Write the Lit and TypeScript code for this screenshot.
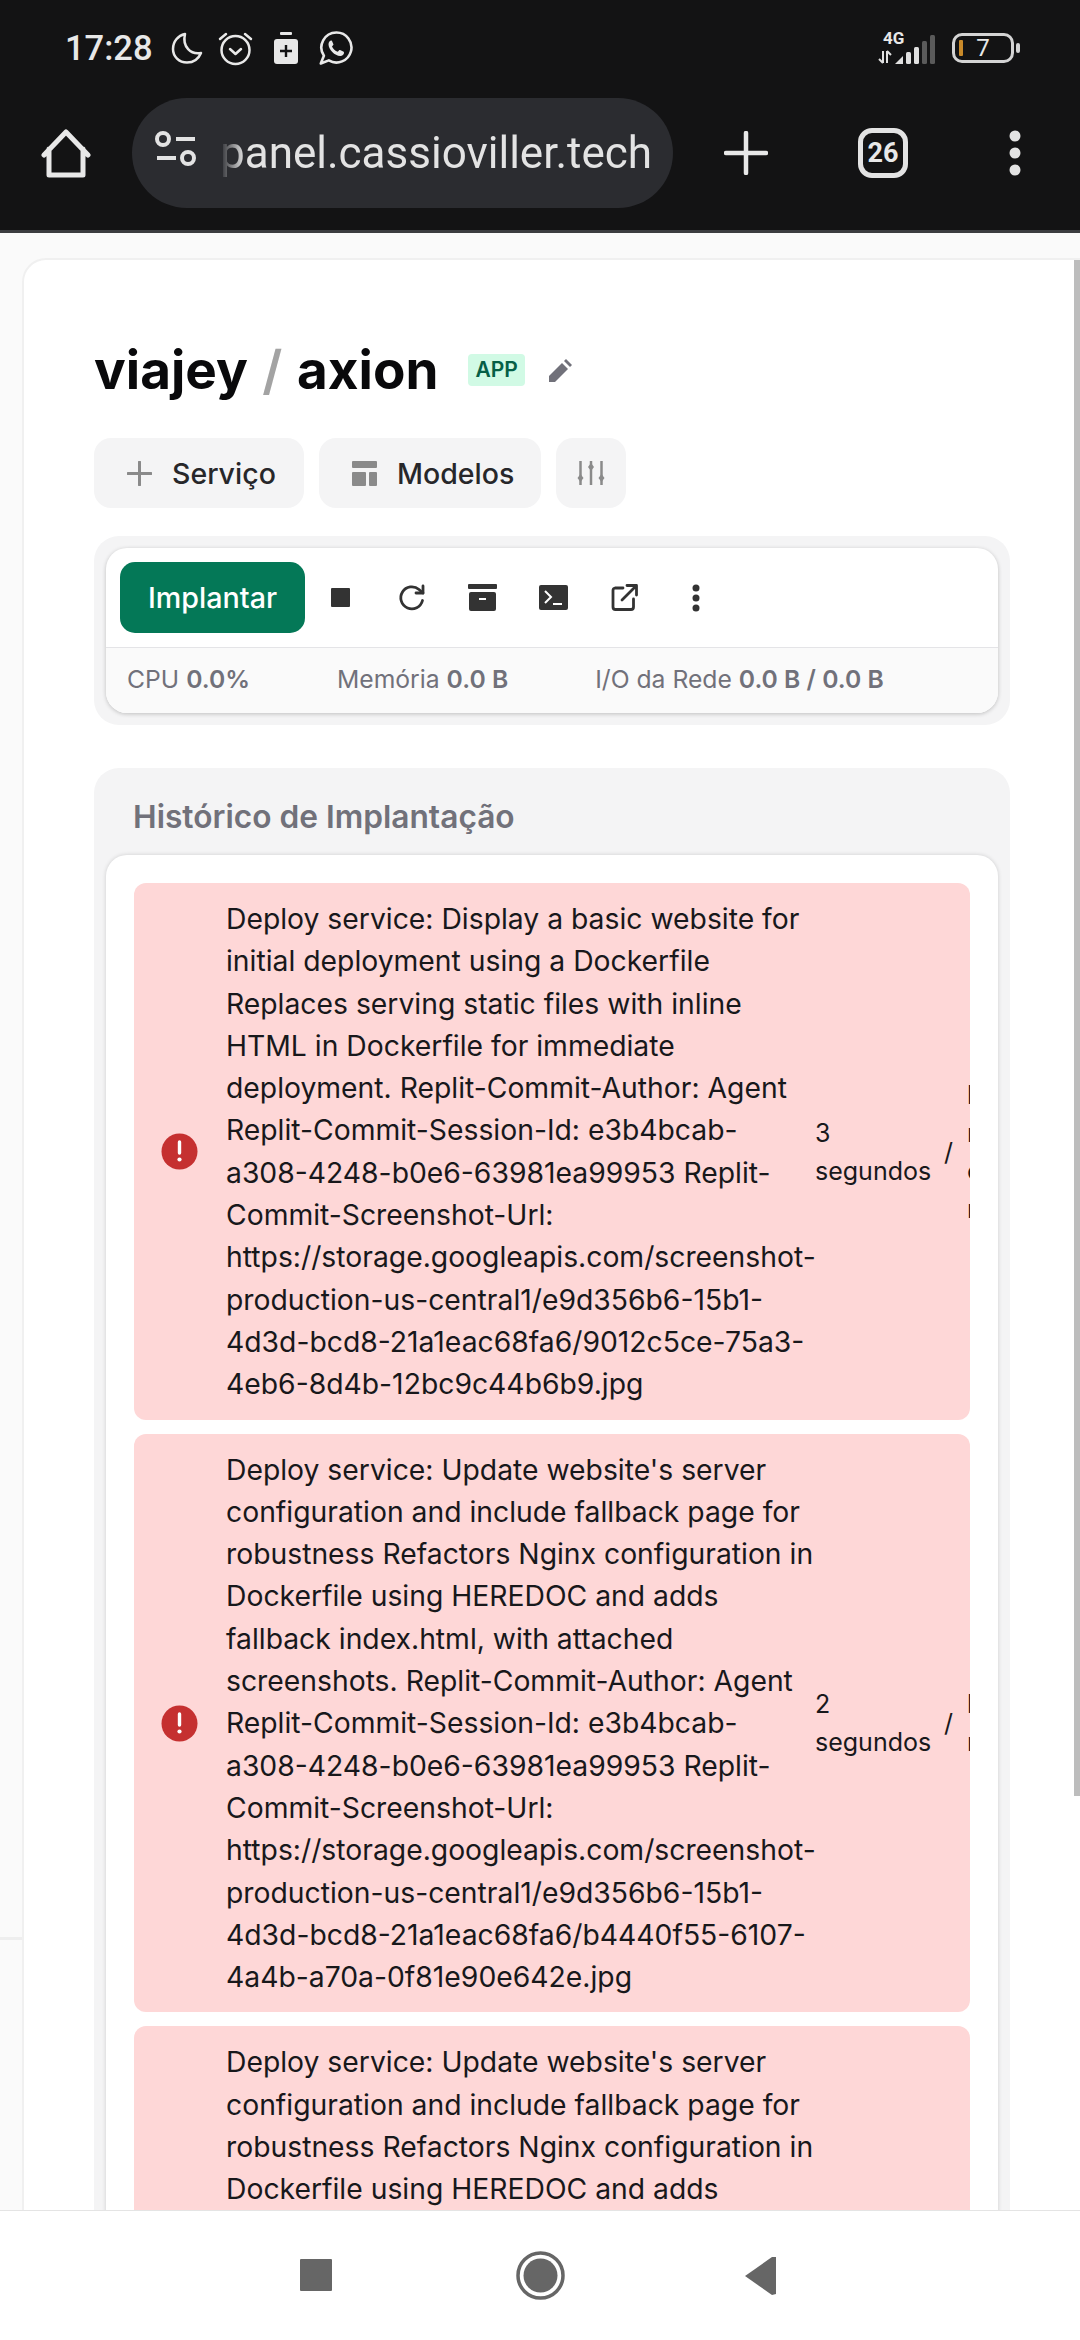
import { LitElement, html, css, svg } from 'lit';
import { customElement } from 'lit/decorators.js';

// deploy rows as shown in the history list
const deployments = [
  {
    text: "Deploy service: Display a basic website for initial deployment using a Dockerfile Replaces serving static files with inline HTML in Dockerfile for immediate deployment. Replit-Commit-Author: Agent Replit-Commit-Session-Id: e3b4bcab-a308-4248-b0e6-63981ea99953 Replit-Commit-Screenshot-Url: https://storage.googleapis.com/screenshot-production-us-central1/e9d356b6-15b1-4d3d-bcd8-21a1eac68fa6/9012c5ce-75a3-4eb6-8d4b-12bc9c44b6b9.jpg",
    time: '3 segundos',
    cut: ['b', 'n', 'c', 'n'],
  },
  {
    text: "Deploy service: Update website's server configuration and include fallback page for robustness Refactors Nginx configuration in Dockerfile using HEREDOC and adds fallback index.html, with attached screenshots. Replit-Commit-Author: Agent Replit-Commit-Session-Id: e3b4bcab-a308-4248-b0e6-63981ea99953 Replit-Commit-Screenshot-Url: https://storage.googleapis.com/screenshot-production-us-central1/e9d356b6-15b1-4d3d-bcd8-21a1eac68fa6/b4440f55-6107-4a4b-a70a-0f81e90e642e.jpg",
    time: '2 segundos',
    cut: ['b', 'n'],
  },
  {
    text: "Deploy service: Update website's server configuration and include fallback page for robustness Refactors Nginx configuration in Dockerfile using HEREDOC and adds fallback index.html, with attached screenshots. Replit-Commit-Author: Agent Replit-Commit-Session-Id: e3b4bcab-a308-4248-b0e6-63981ea99953 Replit-Commit-Screenshot-Url: https://storage.googleapis.com/screenshot-production-us-central1/e9d356b6-15b1-4d3d-bcd8-21a1eac68fa6/b4440f55-6107-4a4b-a70a-0f81e90e642e.jpg",
    time: '2 segundos',
    cut: ['b', 'n'],
  },
];

const errorIcon = svg`<circle cx="18.5" cy="18.5" r="18" fill="#c53030"/><path d="M18.5 9v11" stroke="#fff" stroke-width="3.4" stroke-linecap="round"/><circle cx="18.5" cy="26.5" r="2.1" fill="#fff"/>`;

@customElement('app-root')
export class AppRoot extends LitElement {
  static override styles = css`
    :host {
      display: flex;
      flex-direction: column;
      width: 1080px;
      height: 2340px;
      overflow: hidden;
      background: #fafafa;
      font-family: Inter, 'Liberation Sans', sans-serif;
    }
    svg { display: block; flex: none; }

    /* phone + browser chrome */
    .chrome {
      flex: none;
      height: 230px;
      background: #131314;
      border-bottom: 3px solid #3c3d40;
      font-family: Roboto, 'Liberation Sans', sans-serif;
      color: #e8e8e8;
    }
    .status {
      height: 96px;
      display: flex;
      align-items: center;
      padding: 0 66px 0 65px;
      box-sizing: border-box;
    }
    .clock { font-size: 34.5px; font-weight: 500; width: 106px; }
    .status .moon { margin-right: 15px; }
    .status .alarm { margin-right: 21px; }
    .status .med { margin-right: 21px; }
    .status .right { margin-left: auto; display: flex; align-items: center; }
    .net { position: relative; width: 58px; height: 34px; margin-right: 16px; }
    .net b {
      position: absolute;
      left: 5px;
      top: -1px;
      font-size: 17px;
      line-height: 17px;
      font-weight: 700;
    }
    .battery {
      position: relative;
      width: 62px;
      height: 30px;
      box-sizing: border-box;
      border: 3px solid #d4d4d4;
      border-radius: 10px;
      font-size: 24px;
      line-height: 24px;
      text-align: center;
    }
    .battery i {
      position: absolute;
      left: 4px;
      top: 4px;
      width: 4px;
      height: 16px;
      border-radius: 1px;
      background: #c98a2a;
    }
    .battery::after {
      content: '';
      position: absolute;
      right: -9px;
      top: 7px;
      width: 4px;
      height: 10px;
      border-radius: 2px;
      background: #d4d4d4;
    }
    .toolbar {
      height: 110px;
      margin-top: 2px;
      display: flex;
      align-items: center;
      padding-left: 41px;
    }
    .pill {
      margin-left: 41px;
      width: 541px;
      height: 110px;
      border-radius: 55px;
      background: #2b2c30;
      display: flex;
      align-items: center;
      padding-left: 23px;
      box-sizing: border-box;
    }
    .url {
      margin-left: 23px;
      font-size: 44px;
      color: #e3e3e3;
      white-space: nowrap;
      -webkit-mask-image: linear-gradient(90deg, transparent, #000 24px);
      mask-image: linear-gradient(90deg, transparent, #000 24px);
    }
    .newtab { margin-left: 51px; }
    .tabs {
      margin-left: 90px;
      width: 50px;
      height: 50px;
      box-sizing: border-box;
      border: 5px solid #e3e3e3;
      border-radius: 14px;
      font-size: 27px;
      font-weight: 700;
      line-height: 40px;
      text-align: center;
    }
    .more { margin-left: 101px; }

    /* page */
    .page {
      flex: 1;
      min-height: 0;
      display: flex;
      padding-top: 25px;
      overflow: hidden;
    }
    .gutter { flex: none; width: 22px; }
    .gutter div { height: 1679px; border-bottom: 3px solid #eeeeee; }
    .card {
      position: relative;
      flex: 1;
      min-width: 0;
      background: #fff;
      border: 2px solid #f0f0f0;
      border-right: 0;
      border-bottom: 0;
      border-top-left-radius: 24px;
      padding: 76px 70px 0 70px;
    }
    .scrollbar {
      position: absolute;
      right: 0;
      top: 0;
      width: 6px;
      height: 1536px;
      background: #bdbdbd;
    }
    .title { display: flex; align-items: center; height: 68px; }
    h1 {
      margin: 0;
      font-size: 53px;
      line-height: 68px;
      font-weight: 700;
      color: #09090b;
      white-space: nowrap;
    }
    h1 span { color: #a3a3a3; font-weight: 600; margin: 0 2px; }
    .badge {
      margin-left: 30px;
      padding: 0 7px;
      height: 32px;
      line-height: 32px;
      background: #d1fae5;
      color: #065f46;
      border-radius: 4px;
      font-size: 21px;
      font-weight: 600;
    }
    .pencil { margin-left: 24px; }
    .actions { display: flex; gap: 15px; margin-top: 34px; }
    .btn {
      height: 70px;
      display: flex;
      align-items: center;
      background: #f4f4f5;
      border-radius: 17px;
      font-size: 28.5px;
      font-weight: 500;
      color: #27272a;
    }
    .btn svg { margin-right: 20px; }
    .btn.service { width: 210px; padding-left: 33px; box-sizing: border-box; }
    .btn.models { width: 222px; padding-left: 33px; box-sizing: border-box; }
    .btn.tune { width: 70px; justify-content: center; }
    .btn.tune svg { margin: 0; }

    .deploy {
      margin-top: 28px;
      padding: 12px;
      background: #f4f4f5;
      border-radius: 25px;
    }
    .deploy-inner {
      background: #fff;
      border-radius: 21px;
      overflow: hidden;
      box-shadow: 0 1px 4px rgba(0, 0, 0, 0.22);
    }
    .tools { display: flex; align-items: center; padding: 14px; }
    .implantar {
      width: 185px;
      height: 71px;
      display: flex;
      align-items: center;
      justify-content: center;
      background: #047857;
      color: #fff;
      border-radius: 15px;
      font-size: 28.7px;
      font-weight: 500;
    }
    .tool { width: 71px; display: flex; justify-content: center; }
    .stats {
      height: 66px;
      padding: 0 0 4px 21px;
      box-sizing: border-box;
      display: flex;
      align-items: center;
      gap: 87px;
      border-top: 1px solid #e4e4e7;
      background: #fafafa;
      color: #71717a;
      font-size: 24.7px;
      white-space: nowrap;
    }
    .stats b { font-weight: 600; }

    .history {
      margin-top: 43px;
      padding: 0 12px;
      background: #f4f4f5;
      border-radius: 25px 25px 0 0;
    }
    h2 {
      margin: 0;
      height: 87px;
      box-sizing: border-box;
      padding: 29px 0 0 27px;
      font-size: 31.7px;
      line-height: 40px;
      font-weight: 600;
      color: #71717a;
    }
    .list {
      display: flex;
      flex-direction: column;
      gap: 14px;
      padding: 28px;
      background: #fff;
      border-radius: 21px 21px 0 0;
      box-shadow: 0 0 4px rgba(0, 0, 0, 0.16);
    }
    .row {
      display: flex;
      align-items: center;
      padding: 15px 0 14px 27px;
      background: #fed7d7;
      border-radius: 12px;
      overflow: hidden;
      color: #18181b;
    }
    .msg {
      flex: none;
      width: 589px;
      margin-left: 28px;
      font-size: 28.3px;
      line-height: 42.3px;
    }
    .when {
      flex: none;
      width: 116px;
      font-size: 25px;
      line-height: 38px;
    }
    .sep { flex: none; margin-left: 13px; font-size: 25px; }
    .cut {
      flex: none;
      margin-left: 14px;
      font-size: 25px;
      line-height: 38px;
    }

    /* android nav */
    .nav {
      flex: none;
      height: 130px;
      box-sizing: border-box;
      background: #fff;
      border-top: 1px solid #e4e4e4;
      position: relative;
      z-index: 1;
    }
    .nav svg { width: 1080px; height: 129px; }
  `;

  private chrome() {
    return html`
      <div class="chrome">
        <div class="status">
          <span class="clock">17:28</span>
          <svg class="moon" width="32" height="32" viewBox="0 0 32 32" fill="none" stroke="#e8e8e8" stroke-width="2.5" stroke-linejoin="round">
            <path d="M14 2C7 3.5 2 9.5 2 17c0 7.5 6 13.5 14 13.5 6.500 0 11.500-3.500 14-9.500C20 23 11 15 14 2Z"/>
          </svg>
          <svg class="alarm" width="35" height="35" viewBox="0 0 35 35" fill="none" stroke="#e8e8e8" stroke-width="2.500" stroke-linecap="round" stroke-linejoin="round">
            <circle cx="17.500" cy="19" r="14"/>
            <path d="M2 8l6-5M33 8l-6-5M12 18l5.500 5 5.500-5"/>
          </svg>
          <svg class="med" width="24" height="32" viewBox="0 0 24 32">
            <rect x="6" y="0" width="12" height="3" rx="1" fill="#e8e8e8"/>
            <rect x="0" y="7" width="24" height="25" rx="3" fill="#e8e8e8"/>
            <path d="M12 13v12M6 19h12" stroke="#131314" stroke-width="2.400"/>
          </svg>
          <svg width="34" height="34" viewBox="0 0 34 34" fill="none">
            <path d="M17.500 1.500a15 15 0 1 1-7.700 27.900L1.800 32.500l3.100-7.700A15 15 0 0 1 17.500 1.500Z" stroke="#e8e8e8" stroke-width="2.600" stroke-linejoin="round"/>
            <path d="M12.300 9.500c-1.300 0-2.800 1.700-2.800 3.700 0 5.300 6.300 11.600 11.700 11.800 2 .1 3.800-1.500 3.800-3 0-.6-.1-1.100-.3-1.300l-3.600-1.700c-.4-.2-.7-.1-1 .2l-1.300 1.600c-2.700-1-4.600-2.800-5.800-5.300l1.200-1.400c.3-.3.3-.6.200-.9l-1.500-3.400c-.2-.3-.4-.3-1.600-.3Z" fill="#e8e8e8"/>
          </svg>
          <div class="right">
            <div class="net">
              <b>4G</b>
              <svg width="58" height="34" viewBox="0 0 58 34">
                <path d="M5 20v12M1 28l4 4M9 32V20M9 20l4 4" stroke="#e0e0e0" stroke-width="2" fill="none"/>
                <path d="M17 33l8-8v8z" fill="#e0e0e0"/>
                <rect x="28" y="21" width="5" height="12" rx="1.500" fill="#e0e0e0"/>
                <rect x="36" y="16" width="5" height="17" rx="1.500" fill="#e0e0e0"/>
                <rect x="44" y="10" width="5" height="23" rx="1.500" fill="#5a5a5a"/>
                <rect x="52" y="4" width="5" height="29" rx="1.500" fill="#5a5a5a"/>
              </svg>
            </div>
            <div class="battery"><i></i>7</div>
          </div>
        </div>
        <div class="toolbar">
          <svg width="50" height="50" viewBox="0 0 50 50" fill="none" stroke="#e8e8e8" stroke-width="5" stroke-linecap="round" stroke-linejoin="round">
            <path d="M3 27L25 4l22 23M8 21v26h34V21"/>
          </svg>
          <div class="pill">
            <svg width="42" height="44" viewBox="0 0 42 44" fill="none" stroke="#e3e3e3" stroke-width="4">
              <circle cx="8" cy="8" r="6"/>
              <path d="M21 8h19M2 27h19"/>
              <circle cx="33" cy="27" r="6"/>
            </svg>
            <span class="url">panel.cassioviller.tech</span>
          </div>
          <svg class="newtab" width="44" height="44" viewBox="0 0 44 44" stroke="#e8e8e8" stroke-width="4.500" stroke-linecap="round">
            <path d="M22 2v40M2 22h40"/>
          </svg>
          <div class="tabs">26</div>
          <svg class="more" width="12" height="46" viewBox="0 0 12 46" fill="#e3e3e3">
            <circle cx="6" cy="6" r="5.500"/><circle cx="6" cy="23" r="5.500"/><circle cx="6" cy="40" r="5.500"/>
          </svg>
        </div>
      </div>
    `;
  }

  private tools() {
    return html`
      <div class="tools">
        <div class="implantar">Implantar</div>
        <div class="tool"><svg width="19" height="19" viewBox="0 0 19 19"><rect width="19" height="19" rx="1" fill="#333"/></svg></div>
        <div class="tool">
          <svg width="28" height="28" viewBox="0 0 28 28" fill="none" stroke="#333" stroke-width="2.800" stroke-linecap="round" stroke-linejoin="round">
            <path d="M24.500 16.500A11 11 0 1 1 21 5.500L25 9"/>
            <path d="M25 2v7h-7"/>
          </svg>
        </div>
        <div class="tool">
          <svg width="29" height="27" viewBox="0 0 29 27">
            <rect x="0" y="0" width="29" height="5" rx="1" fill="#333"/>
            <rect x="1" y="8" width="27" height="19" rx="2" fill="#333"/>
            <rect x="11" y="14" width="7" height="2" fill="#fff"/>
          </svg>
        </div>
        <div class="tool">
          <svg width="29" height="25" viewBox="0 0 29 25">
            <rect width="29" height="25" rx="2" fill="#333"/>
            <path d="M6 6l6 6-6 6M14 19h9" fill="none" stroke="#fff" stroke-width="2"/>
          </svg>
        </div>
        <div class="tool">
          <svg width="27" height="27" viewBox="0 0 27 27" fill="none" stroke="#333" stroke-width="2.800" stroke-linecap="round" stroke-linejoin="round">
            <path d="M12 4H4a2.500 2.500 0 0 0-2 2.500V23a2.500 2.500 0 0 0 2.500 2.500H20a2.500 2.500 0 0 0 2.500-2.500v-8"/>
            <path d="M11 16L25 2M16 1.500h9.500V11"/>
          </svg>
        </div>
        <div class="tool">
          <svg width="10" height="28" viewBox="0 0 10 28" fill="#333">
            <circle cx="5" cy="4" r="3.500"/><circle cx="5" cy="14" r="3.500"/><circle cx="5" cy="24" r="3.500"/>
          </svg>
        </div>
      </div>
    `;
  }

  override render() {
    return html`
      ${this.chrome()}
      <div class="page">
        <div class="gutter"><div></div></div>
        <div class="card">
          <div class="scrollbar"></div>
          <div class="title">
            <h1>viajey <span>/</span> axion</h1>
            <span class="badge">APP</span>
            <svg class="pencil" width="23" height="23" viewBox="0 0 23 23" fill="#71717a">
              <path d="M0 23v-6L13 4l6 6L6 23Z"/><path d="M15 2l2-2 6 6-2 2Z"/>
            </svg>
          </div>
          <div class="actions">
            <div class="btn service">
              <svg width="25" height="25" viewBox="0 0 25 25" stroke="#8a8a8a" stroke-width="3" stroke-linecap="round"><path d="M12.500 1v23M1 12.500h23"/></svg>
              Serviço
            </div>
            <div class="btn models">
              <svg width="25" height="25" viewBox="0 0 25 25" fill="#8a8a8a">
                <rect width="25" height="7" rx="1"/><rect y="11" width="14" height="14" rx="1"/><rect x="17" y="11" width="8" height="14" rx="1"/>
              </svg>
              Modelos
            </div>
            <div class="btn tune">
              <svg width="28" height="26" viewBox="0 0 28 26" fill="#8a8a8a" stroke="#8a8a8a" stroke-width="2.500">
                <path d="M3.500 1v24M14 1v24M24.500 1v24"/>
                <path d="M3.500 14l3 4-3 4-3-4zM14 3l3 4-3 4-3-4zM24.500 14l3 4-3 4-3-4z" stroke="none"/>
              </svg>
            </div>
          </div>
          <div class="deploy">
            <div class="deploy-inner">
              ${this.tools()}
              <div class="stats">
                <span>CPU <b>0.0%</b></span>
                <span>Memória <b>0.0 B</b></span>
                <span>I/O da Rede <b>0.0 B / 0.0 B</b></span>
              </div>
            </div>
          </div>
          <div class="history">
            <h2>Histórico de Implantação</h2>
            <div class="list">
              ${deployments.map(
                (d) => html`
                  <div class="row">
                    <svg width="37" height="37" viewBox="0 0 37 37">${errorIcon}</svg>
                    <div class="msg">${d.text}</div>
                    <div class="when">${d.time}</div>
                    <div class="sep">/</div>
                    <div class="cut">${d.cut.map((c) => html`<div>${c}</div>`)}</div>
                  </div>
                `,
              )}
            </div>
          </div>
        </div>
      </div>
      <div class="nav">
        <svg viewBox="0 0 1080 129" fill="#666">
          <rect x="300" y="48" width="32" height="32" rx="1"/>
          <circle cx="540.500" cy="64.500" r="22.500" fill="none" stroke="#666" stroke-width="3.500"/>
          <circle cx="540.500" cy="64.500" r="17"/>
          <path d="M776 46v37l-4 1-27-19 27-19Z"/>
        </svg>
      </div>
    `;
  }
}
